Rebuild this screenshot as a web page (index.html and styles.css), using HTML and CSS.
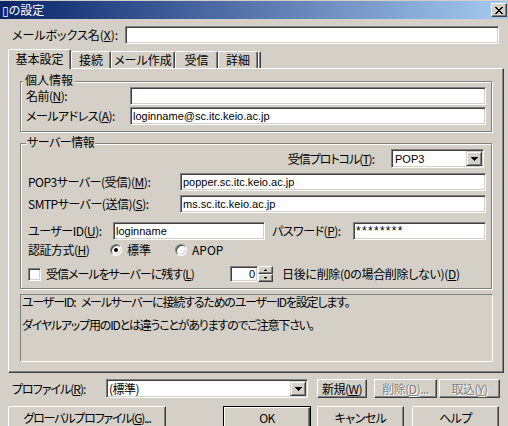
FILE: index.html
```html
<!DOCTYPE html>
<html lang="ja">
<head>
<meta charset="utf-8">
<title>設定</title>
<link rel="stylesheet" href="styles.css">
</head>
<body>
<div class="dlg">
  <div class="title">
    <span class="title-text">▯の設定</span>
    <span class="close"><svg width="8" height="7" viewBox="0 0 8 7"><path d="M0 0h2v1H0zM6 0h2v1H6zM1 1h2v1H1zM5 1h2v1H5zM2 2h4v1H2zM3 3h2v1H3zM2 4h4v1H2zM1 5h2v1H1zM5 5h2v1H5zM0 6h2v1H0zM6 6h2v1H6z" fill="#000"/></svg></span>
  </div>

  <div class="mbrow">
    <span class="mblbl">メールボックス名(<u>X</u>):</span>
    <div class="edit mbedit"></div>
  </div>

  <div class="tabs">
    <div class="tab sel t1">基本設定</div>
    <div class="tab t2">接続</div>
    <div class="tab t3">メール作成</div>
    <div class="tab t4">受信</div>
    <div class="tab t5">詳細</div>
    <div class="tab t6"></div>
  </div>

  <div class="panel">
    <div class="group g1">
      <span class="legend">個人情報</span>
      <div class="frow">
        <span class="l1">名前(<u>N</u>):</span>
        <div class="edit grow"></div>
      </div>
      <div class="frow r2">
        <span class="l1">メールアドレス(<u>A</u>):</span>
        <div class="edit grow"><span class="val">loginname@sc.itc.keio.ac.jp</span></div>
      </div>
    </div>

    <div class="group g2">
      <span class="legend lg2">サーバー情報</span>
      <div class="prow">
        <span class="tight">受信プロトコル(<u>T</u>):</span>
        <div class="select">
          <span class="val sval">POP3</span>
          <span class="arrow"><svg width="7" height="4" viewBox="0 0 7 4"><path d="M0 0h7v1H0zM1 1h5v1H1zM2 2h3v1H2zM3 3h1v1H3z" fill="#000"/></svg></span>
        </div>
      </div>
      <div class="frow srow">
        <span class="l2">POP3サーバー(受信)(<u>M</u>):</span>
        <div class="edit grow"><span class="val">popper.sc.itc.keio.ac.jp</span></div>
      </div>
      <div class="frow srow2">
        <span class="l2">SMTPサーバー(送信)(<u>S</u>):</span>
        <div class="edit grow"><span class="val">ms.sc.itc.keio.ac.jp</span></div>
      </div>
      <div class="frow urow">
        <span class="l3">ユーザーID(<u>U</u>):</span>
        <div class="edit uedit"><span class="val">loginname</span></div>
        <span class="l4">パスワード(<u>P</u>):</span>
        <div class="edit grow"><span class="val pw">********</span></div>
      </div>
      <div class="arow">
        <span class="l5">認証方式(<u>H</u>)</span>
        <span class="opt o1"><span class="radio"><span class="dot"></span></span><span class="otext">標準</span></span>
        <span class="opt"><span class="radio"></span><span class="otext">APOP</span></span>
      </div>
      <div class="crow">
        <span class="chk-wrap"><span class="check"></span><span class="ctext tight">受信メールをサーバーに残す(<u>L</u>)</span></span>
        <div class="edit spinedit"><span class="val">0</span></div>
        <span class="spin">
          <span class="sb"><svg width="3" height="2" viewBox="0 0 3 2"><path d="M1 0h1v1H1zM0 1h3v1H0z" fill="#000"/></svg></span>
          <span class="sb"><svg width="3" height="2" viewBox="0 0 3 2"><path d="M0 0h3v1H0zM1 1h1v1H1z" fill="#000"/></svg></span>
        </span>
        <span class="dtext">日後に削除(0の場合削除しない)(<u>D</u>)</span>
      </div>
    </div>

    <div class="desc">
      <p>ユーザーID: メールサーバーに接続するためのユーザーIDを設定します。</p>
      <p>ダイヤルアップ用のIDとは違うことがありますのでご注意下さい。</p>
    </div>
  </div>

  <div class="profrow">
    <span class="plbl tight">プロファイル(<u>R</u>):</span>
    <div class="combo">
      <span class="cval">(標準)</span>
      <span class="arrow"><svg width="7" height="4" viewBox="0 0 7 4"><path d="M0 0h7v1H0zM1 1h5v1H1zM2 2h3v1H2zM3 3h1v1H3z" fill="#000"/></svg></span>
    </div>
    <span class="btn b-new">新規(<u>W</u>)</span>
    <span class="btn dis b-del">削除(<u>D</u>)...</span>
    <span class="btn dis b-imp">取込(<u>Y</u>)</span>
  </div>

  <div class="btnrow">
    <span class="btn big b-glob">グローバルプロファイル(<u>G</u>)...</span>
    <span class="btn big def b-ok">OK</span>
    <span class="btn big b-cancel">キャンセル</span>
    <span class="btn big b-help">ヘルプ</span>
  </div>
</div>
</body>
</html>
```
FILE: styles.css
```css
* { box-sizing: border-box; }
html, body { margin: 0; padding: 0; }
body {
  background: #d4d0c8;
  font-family: "Noto Sans CJK JP", "Noto Sans CJK SC", "DejaVu Sans", sans-serif;
  font-size: 12px;
  line-height: 14px;
  color: #000;
  font-feature-settings: "palt";
  letter-spacing: -0.5px;
}
u { text-decoration: underline; text-underline-offset: 1px; }
.tight { letter-spacing: -1px; }

.dlg { width: 508px; height: 426px; overflow: hidden; padding-top: 1px; }

/* title bar */
.title {
  height: 18px;
  background: linear-gradient(to right, #0a246a, #a6caf0);
  display: flex;
  align-items: center;
  justify-content: space-between;
  padding: 0 1px 0 2px;
}
.title-text { color: #fff; letter-spacing: 0; }
.close {
  width: 16px; height: 14px;
  background: #d4d0c8;
  border: 1px solid;
  border-color: #fff #404040 #404040 #fff;
  box-shadow: inset -1px -1px #808080;
  display: flex; align-items: center; justify-content: center;
}
.close svg { display: block; }

/* sunken edit */
.edit {
  height: 18px;
  background: #fff;
  border: 1px solid;
  border-color: #808080 #fff #fff #808080;
  box-shadow: inset 1px 1px #404040, inset -1px -1px #d4d0c8;
  display: flex; align-items: center;
  padding: 0 2px 0 2px;
}
.val { font-family: "Liberation Sans", sans-serif; font-size: 11px; white-space: nowrap; letter-spacing: 0; }
.grow { flex: 1; }

.mbrow { display: flex; align-items: center; height: 18px; margin-top: 7px; padding-left: 12px; }
.mblbl { width: 113px; letter-spacing: 0; }
.mbedit { width: 374px; }

/* tabs */
.tabs { display: flex; align-items: flex-end; height: 19px; margin-top: 5px; padding-left: 8px; }
.tab {
  height: 17px;
  border: 1px solid;
  border-bottom: none;
  border-color: #fff #404040 transparent #fff;
  box-shadow: inset -1px 0 #808080;
  border-radius: 2px 2px 0 0;
  display: flex; align-items: center; justify-content: center;
  white-space: nowrap;
  letter-spacing: 0;
}
.tab.sel { height: 20px; margin-bottom: -1px; position: relative; z-index: 1; background: #d4d0c8; padding-bottom: 2px; }
.t1 { width: 63px; }
.t2 { width: 40px; }
.t3 { width: 64px; }
.t4 { width: 43px; }
.t5 { width: 40px; }
.t6 { width: 3px; }

/* panel */
.panel {
  width: 496px; height: 305px;
  margin-left: 8px;
  border: 1px solid;
  border-color: #fff #404040 #404040 #fff;
  box-shadow: inset -1px -1px #808080;
  padding: 12px 11px 10px 11px;
}
.group {
  position: relative;
  border: 1px solid #808080;
  box-shadow: inset 1px 1px #fff, 1px 1px #fff;
}
.legend {
  position: absolute;
  top: -9px; left: 2px;
  background: #d4d0c8;
  padding: 0 2px;
  line-height: 14px;
  letter-spacing: 0;
}
.lg2 { left: 5px; padding: 0 1px; letter-spacing: -0.5px; }
.g1 { height: 51px; padding: 5px 5px 0 5px; }
.frow { display: flex; align-items: center; height: 18px; }
.r2 { margin-top: 2px; }
.l1 { width: 104px; }

.g2 { height: 146px; margin-top: 11px; padding: 5px 5px 0 7px; }
.prow { display: flex; align-items: center; justify-content: flex-end; height: 19px; }
.select {
  width: 93px; height: 19px;
  margin-left: 17px; margin-right: 2px;
  background: #fff;
  border: 1px solid;
  border-color: #808080 #fff #fff #808080;
  box-shadow: inset 1px 1px #404040, inset -1px -1px #d4d0c8;
  display: flex; align-items: center;
  padding: 1px 1px 1px 2px;
}
.sval { flex: 1; padding-left: 1px; }
.arrow {
  width: 16px; height: 100%;
  background: #d4d0c8;
  border: 1px solid;
  border-color: #d4d0c8 #404040 #404040 #d4d0c8;
  box-shadow: inset 1px 1px #fff, inset -1px -1px #808080;
  display: flex; align-items: center; justify-content: center;
}
.arrow svg { display: block; }
.l2 { width: 152px; }
.srow { margin-top: 5px; }
.srow2 { margin-top: 4px; }
.urow { margin-top: 9px; }
.l3 { width: 85px; }
.uedit { width: 152px; }
.l4 { width: 81px; margin-left: 7px; }
.pw { font-size: 12px; letter-spacing: 1.3px; }

.arow { display: flex; align-items: center; height: 14px; margin-top: 3px; }
.l5 { width: 82px; }
.opt { display: flex; align-items: center; }
.o1 { width: 65px; }
.radio {
  width: 12px; height: 12px;
  border-radius: 50%;
  background: #fff;
  border: 1px solid;
  border-color: #808080 #fff #fff #808080;
  box-shadow: inset 1px 1px #404040, inset -1px -1px #d4d0c8;
  display: flex; align-items: center; justify-content: center;
}
.dot { width: 4px; height: 4px; border-radius: 50%; background: #000; }
.otext { margin-left: 5px; letter-spacing: 0; }

.crow { display: flex; align-items: center; height: 16px; margin-top: 9px; }
.chk-wrap { display: flex; align-items: center; width: 202px; }
.check {
  width: 13px; height: 13px;
  background: #fff;
  border: 1px solid;
  border-color: #808080 #fff #fff #808080;
  box-shadow: inset 1px 1px #404040, inset -1px -1px #d4d0c8;
}
.ctext { margin-left: 5px; }
.spinedit { width: 28px; height: 16px; justify-content: flex-end; padding-right: 2px; }
.spin { display: flex; flex-direction: column; width: 15px; height: 16px; }
.sb {
  flex: 1;
  background: #d4d0c8;
  border: 1px solid;
  border-color: #fff #404040 #404040 #fff;
  box-shadow: inset -1px -1px #808080;
  display: flex; align-items: center; justify-content: center;
}
.sb svg { display: block; }
.dtext { margin-left: 9px; letter-spacing: -0.3px; }

/* description */
.desc {
  width: 473px; height: 68px;
  margin-top: 5px;
  border: 1px solid;
  border-color: #808080 #fff #fff #808080;
  padding: 1px 0 0 1px;
  line-height: 12px;
  letter-spacing: -1.2px;
  word-spacing: 4px;
}
.desc p { margin: 0; white-space: nowrap; }
.desc p + p { margin-top: 11px; }

/* bottom */
.profrow { display: flex; align-items: center; height: 19px; margin-top: 6px; padding-left: 12px; }
.plbl { width: 94px; }
.combo {
  width: 202px; height: 19px;
  background: #fff;
  border: 1px solid;
  border-color: #808080 #fff #fff #808080;
  box-shadow: inset 1px 1px #404040, inset -1px -1px #d4d0c8;
  display: flex; align-items: center;
  padding: 1px;
}
.cval { flex: 1; padding-left: 1px; }
.btn {
  height: 19px;
  background: #d4d0c8;
  border: 1px solid;
  border-color: #fff #404040 #404040 #fff;
  box-shadow: inset -1px -1px #808080;
  display: flex; align-items: center; justify-content: center;
  white-space: nowrap;
}
.dis { color: #808080; text-shadow: 1px 1px #fff; }
.b-new { width: 50px; margin-left: 9px; }
.b-del { width: 63px; margin-left: 7px; }
.b-imp { width: 61px; margin-left: 2px; }

.btnrow { display: flex; align-items: flex-start; margin-top: 8px; }
.big { height: 23px; }
.def {
  border-color: #000;
  box-shadow: inset 1px 1px #fff, inset -1px -1px #404040, inset -2px -2px #808080;
}
.b-glob { width: 158px; margin-left: 8px; letter-spacing: -1.2px; }
.b-ok { width: 88px; margin-left: 57px; }
.b-cancel { width: 87px; margin-left: 6px; }
.b-help { width: 87px; margin-left: 8px; }
```
